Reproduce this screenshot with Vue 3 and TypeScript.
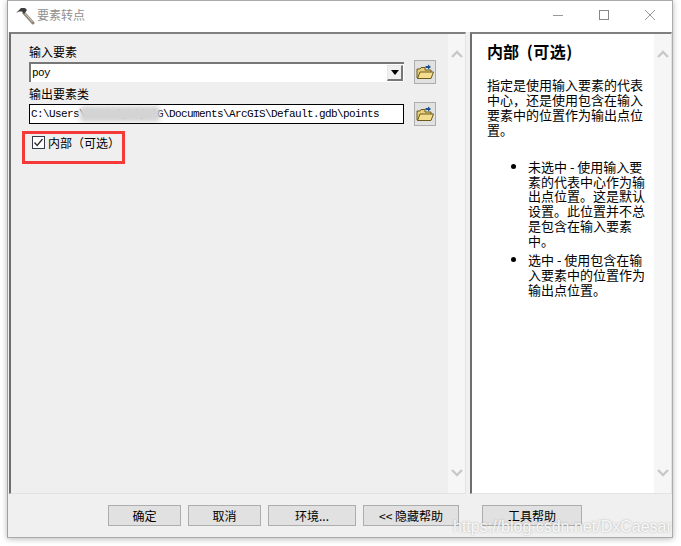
<script setup lang="ts">
const lines1 = ['未选中 - 使用输入要', '素的代表中心作为输', '出点位置。这是默认', '设置。此位置并不总', '是包含在输入要素', '中。']
const lines2 = ['选中 - 使用包含在输', '入要素中的位置作为', '输出点位置。']
const intro = ['指定是使用输入要素的代表', '中心，还是使用包含在输入', '要素中的位置作为输出点位', '置。']
const buttons = [
  { label: '确定', cls: 'b1' },
  { label: '取消', cls: 'b2' },
  { label: '环境...', cls: 'b3' },
  { label: '<< 隐藏帮助', cls: 'b4' },
  { label: '工具帮助', cls: 'b5' },
]
</script>

<template>
  <div class="page">
    <div class="window">
      <header class="titlebar">
        <svg class="hammer" width="20" height="20" viewBox="0 0 20 20">
          <path d="M9 8 L18 18" stroke="#8d8473" stroke-width="3" stroke-linecap="round" />
          <path d="M9.5 8 L17.5 17" stroke="#d8d0c0" stroke-width="1" />
          <path d="M1 8 L6 3 L10 3 L12 5 L9 9 L7 6.5 L4 6.5 Z" fill="#3d3d3d" />
        </svg>
        <span class="title">要素转点</span>
        <span class="spacer"></span>
        <svg class="ctl" width="14" height="14" viewBox="0 0 14 14"><path d="M2 7.5 H12" stroke="#999" /></svg>
        <svg class="ctl mid" width="14" height="14" viewBox="0 0 14 14"><rect x="2.5" y="2.5" width="9" height="9" fill="none" stroke="#888" /></svg>
        <svg class="ctl" width="14" height="14" viewBox="0 0 14 14"><path d="M2 2 L12 12 M12 2 L2 12" stroke="#999" /></svg>
      </header>

      <div class="panes">
        <section class="left">
          <div class="form">
            <div class="label first">输入要素</div>
            <div class="row">
              <div class="combo">
                <span class="mono">poy</span>
                <span class="drop"><i class="tri"></i></span>
              </div>
              <button class="folder" type="button">
                <svg width="18" height="18" viewBox="0 0 18 18">
                  <path d="M12 1.5 L15 4 L12 6.5 V5 H9.5 V3 H12 Z" fill="#1c4f8f" />
                  <path d="M1 15 V6 H4 L5 4.5 H9 V7 H15 V15 Z" fill="#e9cf7a" stroke="#6b5a1e" stroke-width="1" />
                  <path d="M1.5 15.5 L4 9 H17.5 L15 15.5 Z" fill="#f4de8e" stroke="#6b5a1e" stroke-width="1" />
                </svg>
              </button>
            </div>
            <div class="label second">输出要素类</div>
            <div class="row">
              <div class="path">
                <span class="mono">C:\Users\abcdefghijklG\Documents\ArcGIS\Default.gdb\points</span>
                <span class="smudge"></span>
              </div>
              <button class="folder" type="button">
                <svg width="18" height="18" viewBox="0 0 18 18">
                  <path d="M12 1.5 L15 4 L12 6.5 V5 H9.5 V3 H12 Z" fill="#1c4f8f" />
                  <path d="M1 15 V6 H4 L5 4.5 H9 V7 H15 V15 Z" fill="#e9cf7a" stroke="#6b5a1e" stroke-width="1" />
                  <path d="M1.5 15.5 L4 9 H17.5 L15 15.5 Z" fill="#f4de8e" stroke="#6b5a1e" stroke-width="1" />
                </svg>
              </button>
            </div>
            <div class="redbox">
              <span class="check">
                <svg width="13" height="13" viewBox="0 0 13 13"><path d="M2.5 6.5 L5.2 9.5 L10.5 3" fill="none" stroke="#333" stroke-width="1.4" /></svg>
              </span>
              <span class="cjk">内部（可选）</span>
            </div>
          </div>
          <div class="scroll">
            <svg width="12" height="8" viewBox="0 0 12 8"><path d="M1 7 L6 2 L11 7" fill="none" stroke="#c8c8c8" stroke-width="2.4" /></svg>
            <svg width="12" height="8" viewBox="0 0 12 8"><path d="M1 1 L6 6 L11 1" fill="none" stroke="#c8c8c8" stroke-width="2.4" /></svg>
          </div>
        </section>

        <section class="right">
          <div class="help">
            <h1 class="help-title">内部 <span class="paren">(可选)</span></h1>
            <p class="intro"><span v-for="l in intro" :key="l" class="line">{{ l }}</span></p>
            <ul class="list">
              <li><span v-for="l in lines1" :key="l" class="line">{{ l }}</span></li>
              <li><span v-for="l in lines2" :key="l" class="line">{{ l }}</span></li>
            </ul>
          </div>
          <div class="scroll">
            <svg width="12" height="8" viewBox="0 0 12 8"><path d="M1 7 L6 2 L11 7" fill="none" stroke="#c8c8c8" stroke-width="2.4" /></svg>
            <svg width="12" height="8" viewBox="0 0 12 8"><path d="M1 1 L6 6 L11 1" fill="none" stroke="#c8c8c8" stroke-width="2.4" /></svg>
          </div>
        </section>
      </div>

      <footer class="footer">
        <button v-for="b in buttons" :key="b.cls" class="btn" :class="b.cls" type="button">{{ b.label }}</button>
      </footer>
    </div>
    <div class="mark">https://blog.csdn.net/DxCaesar</div>
  </div>
</template>

<style>
html, body { margin: 0; background: #fff; }
</style>

<style scoped>
.page {
  position: relative;
  width: 681px;
  height: 546px;
  overflow: hidden;
  padding: 0 8px 0 7px;
  box-sizing: border-box;
  font-family: "Noto Sans CJK SC", "Liberation Sans", sans-serif;
  font-size: 12px;
  color: #000;
}
.window {
  height: 538px;
  box-sizing: border-box;
  border: 1px solid #ababab;
  border-left-color: #a0a0a0;
  background: #f0f0f0;
  box-shadow: 0 1px 6px rgba(0, 0, 0, 0.28);
  display: flex;
  flex-direction: column;
}
.titlebar {
  height: 31px;
  background: #fff;
  display: flex;
  align-items: center;
  padding: 0 15px 0 7px;
  flex: none;
}
.hammer { margin-top: -3px; }
.title { margin-left: 2px; color: #8f8f8f; font-size: 12px; line-height: 14px; margin-top: -4px; }
.spacer { flex: 1; }
.ctl { margin-top: -3px; }
.mid { margin: -3px 32px 0 32px; }
.panes {
  height: 462px;
  flex: none;
  display: flex;
  padding-left: 1px;
  background: #f0f0f0;
}
.left {
  width: 457px;
  flex: none;
  display: flex;
  box-sizing: border-box;
  border-top: 2px solid #808080;
  border-left: 2px solid #6e6e6e;
  border-bottom: 1px solid #e3e3e3;
  border-right: 1px solid #e3e3e3;
  background: #efefef;
}
.form { width: 437px; flex: none; padding-left: 18px; box-sizing: border-box; }
.scroll {
  width: 17px;
  flex: none;
  background: #f6f6f6;
  display: flex;
  flex-direction: column;
  justify-content: space-between;
  align-items: center;
  padding: 16px 0 16px;
  box-sizing: border-box;
}
.label { height: 14px; line-height: 14px; font-size: 12px; }
.label.first { margin-top: 11px; }
.label.second { margin-top: 3px; }
.row {
  display: flex;
  align-items: center;
  height: 24px;
  gap: 10px;
  margin-top: 1px;
}
.combo {
  width: 375px;
  height: 20px;
  box-sizing: border-box;
  background: #fff;
  border-top: 2px solid #777;
  border-left: 2px solid #777;
  display: flex;
  align-items: center;
  justify-content: space-between;
  padding-left: 1px;
  padding-right: 1px;
}
.mono {
  font-family: "Liberation Mono", "DejaVu Sans Mono", monospace;
  font-size: 11px;
  letter-spacing: -0.6px;
  white-space: nowrap;
  line-height: 14px;
}
.drop {
  width: 16px;
  height: 16px;
  box-sizing: border-box;
  background: #f0f0f0;
  border-right: 2px solid #777;
  border-bottom: 2px solid #777;
  border-top: 1px solid #e8e8e8;
  border-left: 1px solid #e8e8e8;
  display: flex;
  align-items: center;
  justify-content: center;
}
.tri {
  width: 0;
  height: 0;
  border-left: 4px solid transparent;
  border-right: 4px solid transparent;
  border-top: 5px solid #000;
}
.path {
  position: relative;
  width: 375px;
  height: 20px;
  box-sizing: border-box;
  background: #fff;
  border: 1px solid #000;
  display: flex;
  align-items: center;
  padding-left: 1px;
  overflow: hidden;
}
.smudge {
  position: absolute;
  left: 50px;
  top: 1px;
  width: 80px;
  height: 16px;
  background: #d4d4d4;
  filter: blur(2px);
  border-radius: 4px;
}
.folder {
  width: 22px;
  height: 24px;
  padding: 0;
  flex: none;
  background: #e1e1e1;
  border: 1px solid #adadad;
  display: flex;
  align-items: center;
  justify-content: center;
}
.redbox {
  width: 103px;
  height: 33px;
  box-sizing: border-box;
  border: 3px solid #f53838;
  margin: 5px 0 0 -7px;
  padding: 2px 0 0 7px;
  display: flex;
  align-items: flex-start;
  gap: 3px;
  font-size: 12px;
  line-height: 13px;
}
.check {
  width: 13px;
  height: 13px;
  box-sizing: border-box;
  border: 1px solid #333a4a;
  background: #fff;
  display: flex;
  flex: none;
}
.check svg { margin: -1px; }
.cjk { white-space: nowrap; }
.right {
  margin-left: 4px;
  width: 202px;
  flex: none;
  display: flex;
  box-sizing: border-box;
  border-top: 2px solid #808080;
  border-left: 2px solid #6e6e6e;
  border-bottom: 1px solid #e3e3e3;
  border-right: 1px solid #e3e3e3;
  background: #fff;
}
.help { width: 182px; flex: none; padding-left: 15px; box-sizing: border-box; }
.help-title {
  margin: 7px 0 0;
  font-size: 16px;
  line-height: 20px;
  font-weight: 700;
  white-space: nowrap;
}
.paren { margin-left: 4px; letter-spacing: 0.5px; }
.intro {
  margin: 16px 0 0;
  font-size: 13px;
  line-height: 15px;
}
.line { display: block; white-space: nowrap; }
.list {
  margin: 23px 0 0;
  padding: 0 0 0 41px;
  font-size: 13px;
  line-height: 14.7px;
}
.list li { margin-bottom: 5px; }
.footer {
  flex: 1;
  display: flex;
  align-items: flex-start;
  padding: 11px 0 0 100px;
  background: #f0f0f0;
}
.btn {
  height: 21px;
  box-sizing: border-box;
  background: #e1e1e1;
  border: 1px solid #adadad;
  font: 12px/17px "Noto Sans CJK SC", "Liberation Sans", sans-serif;
  color: #000;
  padding: 0;
  flex: none;
  margin-right: 7px;
}
.b1, .b2 { width: 73px; }
.b3 { width: 88px; }
.b4 { width: 96px; margin-right: 23px; }
.b5 { width: 100px; margin-right: 0; }
.mark {
  position: absolute;
  left: 453px;
  top: 517px;
  font-family: "Liberation Sans", sans-serif;
  font-size: 16px;
  line-height: 20px;
  white-space: nowrap;
  color: rgba(255, 255, 255, 0.9);
  text-shadow: 0 0 2px rgba(110, 110, 110, 0.55);
}
</style>
